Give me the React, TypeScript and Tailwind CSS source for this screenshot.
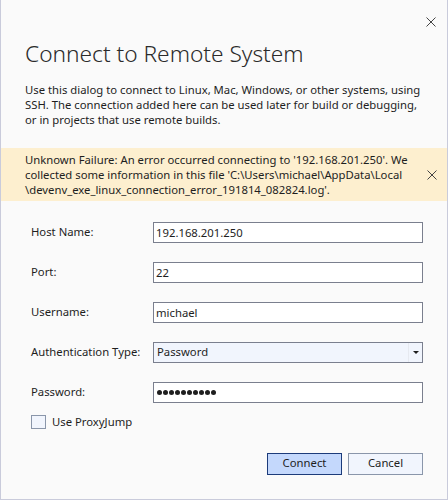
import React, { useState } from 'react';

const font = { fontFamily: '"Noto Sans", "Open Sans", Arial, sans-serif' };

function CloseGlyph({ className }: { className?: string }) {
  return (
    <svg viewBox="0 0 10 10" className={className} aria-hidden="true">
      <path d="M0.5 0.5 L9.5 9.5 M9.5 0.5 L0.5 9.5" stroke="currentColor" strokeWidth="1" fill="none" />
    </svg>
  );
}

interface FieldProps {
  label: string;
  children: React.ReactNode;
}

function Field({ label, children }: FieldProps) {
  return (
    <div className="flex items-center h-[21px]">
      <label className="w-[122px] text-[11.3px] text-[#1e1e1e]">{label}</label>
      {children}
    </div>
  );
}

export default function App() {
  const [host, setHost] = useState('192.168.201.250');
  const [port, setPort] = useState('22');
  const [user, setUser] = useState('michael');
  const [proxy, setProxy] = useState(false);

  const inputCls =
    'w-[270px] h-[21px] px-[2px] bg-white border border-[#7a7f8e] text-[11.3px] text-[#1e1e1e] outline-none';

  return (
    <div
      style={font}
      className="relative w-[448px] h-[500px] bg-[#fafafa] border-x border-b border-[#c9cbdb] flex flex-col"
    >
      <button className="absolute top-[17px] right-[11px] w-[10px] h-[10px] text-[#444]">
        <CloseGlyph className="w-[10px] h-[10px]" />
      </button>

      <h1 className="mt-[39px] ml-[24px] text-[22.7px] leading-[30px] font-light text-[#2b2b2b]">
        Connect to Remote System
      </h1>

      <p className="mt-[13px] ml-[24px] text-[11.3px] leading-[15px] text-[#1e1e1e] whitespace-nowrap">
        Use this dialog to connect to Linux, Mac, Windows, or other systems, using
        <br />
        SSH. The connection added here can be used later for build or debugging,
        <br />
        or in projects that use remote builds.
      </p>

      <div className="mt-[21px] h-[53px] bg-[#fdefcf] flex items-center pl-[24px] pr-[10px]">
        <p className="flex-1 text-[11.3px] leading-[15px] text-[#1e1e1e] whitespace-nowrap">
          Unknown Failure: An error occurred connecting to '192.168.201.250'. We
          <br />
          collected some information in this file 'C:\Users\michael\AppData\Local
          <br />
          \devenv_exe_linux_connection_error_191814_082824.log'.
        </p>
        <CloseGlyph className="w-[10px] h-[10px] text-[#444]" />
      </div>

      <div className="mt-[21px] ml-[30px] flex flex-col gap-[19px]">
        <Field label="Host Name:">
          <input className={inputCls} value={host} onChange={(e) => setHost(e.target.value)} />
        </Field>
        <Field label="Port:">
          <input className={inputCls} value={port} onChange={(e) => setPort(e.target.value)} />
        </Field>
        <Field label="Username:">
          <input className={inputCls} value={user} onChange={(e) => setUser(e.target.value)} />
        </Field>
        <Field label="Authentication Type:">
          <div className="w-[270px] h-[21px] bg-[#f1f5fd] border border-[#7a7f8e] flex items-center text-[11.3px] text-[#1e1e1e]">
            <span className="flex-1 pl-[3px]">Password</span>
            <span className="w-[14px] h-full border-l border-[#e6e9f0] flex items-center justify-center">
              <span className="w-0 h-0 border-x-[3px] border-x-transparent border-t-[3px] border-t-[#1e1e1e]" />
            </span>
          </div>
        </Field>
        <Field label="Password:">
          {/* masked value: ten bullets */}
          <div className="w-[270px] h-[21px] px-[3px] bg-white border border-[#7a7f8e] flex items-center gap-[1px]">
            {Array.from({ length: 10 }).map((_, i) => (
              <span key={i} className="w-[5px] h-[5px] rounded-full bg-[#1e1e1e]" />
            ))}
          </div>
        </Field>
      </div>

      <label className="mt-[11px] ml-[30px] flex items-center gap-[6px] text-[11.3px] text-[#1e1e1e]">
        <span
          onClick={() => setProxy(!proxy)}
          className="w-[15px] h-[14px] bg-[#f1f5fd] border border-[#8a96aa]"
        />
        Use ProxyJump
      </label>

      <div className="mt-[22px] mr-[24px] flex justify-end gap-[6px]">
        <button className="w-[75px] h-[22px] bg-[#c4d8fc] border border-[#1c3b7a] text-[11.3px] text-[#1e1e1e]">
          Connect
        </button>
        <button className="w-[75px] h-[22px] bg-[#f1f5fd] border border-[#8a96aa] text-[11.3px] text-[#1e1e1e]">
          Cancel
        </button>
      </div>
    </div>
  );
}
